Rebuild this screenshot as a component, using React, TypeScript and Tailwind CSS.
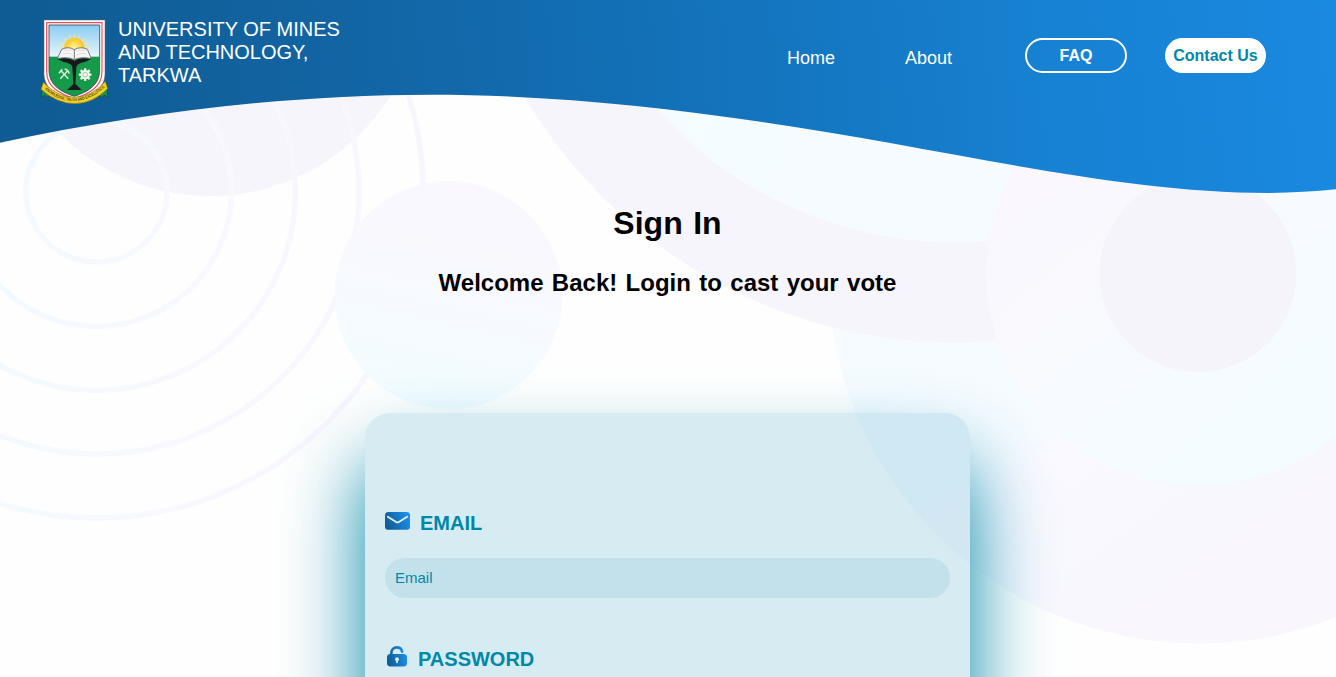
import React from "react";

function Backdrop() {
  return (
    <svg
      className="absolute inset-0 -z-10"
      width="1336"
      height="677"
      viewBox="0 0 1336 677"
      fill="none"
      aria-hidden="true"
    >
      <defs>
        <linearGradient id="outer" gradientUnits="userSpaceOnUse" x1="900" y1="330" x2="1120" y2="640">
          <stop offset="0" stopColor="#f5fbff" />
          <stop offset="0.42" stopColor="#f6fbff" />
          <stop offset="0.5" stopColor="#faf9ff" />
          <stop offset="0.7" stopColor="#f8f8fe" />
          <stop offset="1" stopColor="#f9f6fe" />
        </linearGradient>
        <linearGradient id="middle" gradientUnits="userSpaceOnUse" x1="1050" y1="160" x2="1300" y2="460">
          <stop offset="0" stopColor="#faf7fe" />
          <stop offset="0.3" stopColor="#f9f9fe" />
          <stop offset="0.5" stopColor="#f7fbff" />
          <stop offset="1" stopColor="#f3fcff" />
        </linearGradient>
        <linearGradient id="small" gradientUnits="userSpaceOnUse" x1="475" y1="181" x2="425" y2="409">
          <stop offset="0" stopColor="#faf7fe" />
          <stop offset="0.4" stopColor="#f8f9fe" />
          <stop offset="0.7" stopColor="#f5fbff" />
          <stop offset="1" stopColor="#f2fcff" />
        </linearGradient>
        <linearGradient id="arc" gradientUnits="userSpaceOnUse" x1="650" y1="120" x2="860" y2="200">
          <stop offset="0" stopColor="#f3fdff" />
          <stop offset="1" stopColor="#f6fbff" />
        </linearGradient>
        <linearGradient id="ring" gradientUnits="userSpaceOnUse" x1="20" y1="180" x2="420" y2="250">
          <stop offset="0" stopColor="#f3faff" />
          <stop offset="0.5" stopColor="#f8f8fe" />
          <stop offset="1" stopColor="#f9f5fe" />
        </linearGradient>
        <linearGradient id="wave" gradientUnits="userSpaceOnUse" x1="0" y1="120" x2="1336" y2="0">
          <stop offset="0" stopColor="#0f5b92" />
          <stop offset="0.25" stopColor="#1264a2" />
          <stop offset="0.5" stopColor="#1371b8" />
          <stop offset="0.78" stopColor="#1781d2" />
          <stop offset="1" stopColor="#1a89e0" />
        </linearGradient>
      </defs>
      <rect width="1336" height="677" fill="#fefefe" />
      <circle cx="210" cy="-17" r="213" fill="#f6f5fb" />
      <g stroke="url(#ring)" strokeWidth="5.5">
        <circle cx="96.5" cy="191.5" r="70.5" />
        <circle cx="96.5" cy="191.5" r="135" />
        <circle cx="96.5" cy="191.5" r="199" />
        <circle cx="96.5" cy="191.5" r="262.5" />
        <circle cx="96.5" cy="191.5" r="326.5" />
      </g>
      <circle cx="448.5" cy="295" r="114" fill="url(#small)" />
      <circle cx="1199" cy="273" r="370.5" fill="url(#outer)" />
      <circle cx="955" cy="-157.5" r="500" fill="#f6f5fb" />
      <circle cx="955" cy="-157.5" r="400" fill="url(#arc)" />
      <circle cx="1199" cy="273" r="212.5" fill="url(#middle)" />
      <circle cx="1198" cy="273.5" r="98.5" fill="#f5f4fb" />
      <path
        d="M0 0H1336V189.3C1314 191.5 1291 192.9 1268 192.9C1150 192.9 1018 166 893 143.5C739 116 585 94.7 430 94.7C290 94.7 145 112 0 142.7Z"
        fill="url(#wave)"
      />
    </svg>
  );
}

function Crest() {
  const rays = [-80, -60, -40, -20, 0, 20, 40, 60, 80];
  const teeth = [0, 45, 90, 135];
  return (
    <svg width="90" height="105" viewBox="0 0 270 315" fill="none" role="img" aria-label="University crest">
      <defs>
        <linearGradient id="sky" x1="0" y1="0" x2="0" y2="1">
          <stop offset="0" stopColor="#86caf2" />
          <stop offset="1" stopColor="#e8f7fb" />
        </linearGradient>
        <radialGradient id="sun">
          <stop offset="0" stopColor="#fff7b0" />
          <stop offset="0.7" stopColor="#fbd43a" />
          <stop offset="1" stopColor="#f8c52c" />
        </radialGradient>
        <clipPath id="field">
          <path d="M57 45H209V180C209 226 172 246 133 259C94 246 57 226 57 180Z" />
        </clipPath>
        <path id="motto" d="M44 238Q132 311 222 234" />
      </defs>
      <path d="M42 30H225V190C225 240 180 262 133 276C86 262 42 240 42 190Z" fill="#fffdfd" stroke="#6b6474" strokeWidth="1.5" />
      <path d="M50 38H216V185C216 232 175 252 133 266C91 252 50 232 50 185Z" stroke="#e4525f" strokeWidth="3.5" />
      <g clipPath="url(#field)">
        <rect x="50" y="40" width="170" height="102" fill="url(#sky)" />
        <g stroke="#fae38a" strokeWidth="4">
          {rays.map((a) => (
            <path key={a} d="M133 74V92" transform={`rotate(${a} 133 120)`} />
          ))}
        </g>
        <circle cx="133" cy="114" r="31" fill="url(#sun)" />
        <rect x="50" y="140" width="170" height="130" fill="#159a49" />
      </g>
      <path d="M57 45H209V180C209 226 172 246 133 259C94 246 57 226 57 180Z" stroke="#42424a" strokeWidth="2.5" />
      <path d="M82 147Q112 141 133 152Q154 141 184 147L165 156Q146 158 139 170L136 222Q147 231 155 240H111Q121 231 130 222L127 170Q120 158 101 156Z" fill="#17191c" />
      <path d="M95 118Q115 108 133 119Q152 108 172 118L184 146Q154 139 133 149Q112 139 82 146Z" fill="#f7f5f6" stroke="#605e65" strokeWidth="2.5" />
      <path d="M133 119V148" stroke="#77757b" strokeWidth="3" />
      <path d="M101 124Q118 116 128 124M97 133Q116 126 128 135M139 124Q152 116 166 123M139 135Q155 126 170 132" stroke="#d4d1d7" strokeWidth="2" />
      <g stroke="#d9eadb" strokeWidth="4.5">
        <path d="M91 206L113 182M92 181L115 206" />
        <path d="M87 190L97 178M104 177Q116 180 117 191" strokeWidth="5" />
      </g>
      <g fill="#eef5ec">
        {teeth.map((a) => (
          <rect key={a} x="162" y="175" width="7" height="38" transform={`rotate(${a} 165.5 194)`} />
        ))}
        <circle cx="165.5" cy="194" r="14" />
      </g>
      <circle cx="165.5" cy="194" r="7" stroke="#a7c9ad" strokeWidth="3" />
      <path d="M37 218L34 264L44 255L54 263L63 247ZM229 216L234 264L225 255L214 263L202 247Z" fill="#16914b" stroke="#263c2c" strokeWidth="2" />
      <path d="M40 217Q84 262 133 262Q184 262 226 214L233 236Q188 281 133 281Q81 281 33 238Z" fill="#f2d126" stroke="#806d24" strokeWidth="2" />
      <text fontFamily="Liberation Sans, sans-serif" fontSize="12.5" fontWeight="700" fill="#5b4b13">
        <textPath href="#motto" textLength="200" lengthAdjust="spacingAndGlyphs">
          KNOWLEDGE, TRUTH AND EXCELLENCE
        </textPath>
      </text>
    </svg>
  );
}

function MailIcon() {
  return (
    <svg width="25" height="18" viewBox="0 0 25 18" fill="none" aria-hidden="true">
      <defs>
        <linearGradient id="mail" x1="0" y1="0.6" x2="1" y2="0.3">
          <stop offset="0" stopColor="#0f5a92" />
          <stop offset="1" stopColor="#1e90ee" />
        </linearGradient>
      </defs>
      <rect width="25" height="17.8" rx="3.4" fill="url(#mail)" />
      <path d="M2.8 4.7L11.2 10Q12.5 10.9 13.8 10L22.2 4.7" stroke="#e3f1f8" strokeWidth="1.8" strokeLinecap="round" />
    </svg>
  );
}

function LockIcon() {
  return (
    <svg width="20" height="21" viewBox="0 0 20 21" fill="none" aria-hidden="true">
      <defs>
        <linearGradient id="lock" gradientUnits="userSpaceOnUse" x1="0" y1="14" x2="20" y2="9">
          <stop offset="0" stopColor="#0f5a92" />
          <stop offset="1" stopColor="#1e90ee" />
        </linearGradient>
      </defs>
      <path d="M4.4 9V6.6C4.4 3.7 6.8 1.4 9.7 1.4C12.6 1.4 14.7 3.2 15.2 5.8" stroke="url(#lock)" strokeWidth="2.6" strokeLinecap="round" />
      <rect y="8" width="20" height="12.4" rx="3.4" fill="url(#lock)" />
      <circle cx="10" cy="13.2" r="1.9" fill="#e3f1f8" />
      <path d="M10 13.5V16.3" stroke="#e3f1f8" strokeWidth="1.7" strokeLinecap="round" />
    </svg>
  );
}

export default function App() {
  return (
    <div className="relative isolate h-[677px] w-[1336px] overflow-hidden font-['Liberation_Sans',Arial,sans-serif]">
      <Backdrop />
      <header className="flex h-[190px] items-start pr-[70px] pl-[30px]">
        <div className="flex items-start pt-[10px]">
          <Crest />
          <p className="-ml-0.5 w-[240px] pt-2 text-xl leading-[23px] text-white">
            UNIVERSITY OF MINES AND TECHNOLOGY, TARKWA
          </p>
        </div>
        <nav className="ml-auto flex pt-[38px] text-white">
          <a className="mr-[70px] pt-[9px] text-lg leading-[22px]" href="#home">Home</a>
          <a className="mr-[73px] pt-[9px] text-lg leading-[22px]" href="#about">About</a>
          <button className="mr-[38px] h-[35px] w-[102px] rounded-full border-2 border-white text-base leading-none font-bold">
            FAQ
          </button>
          <button className="h-[35px] w-[101px] rounded-full bg-white text-base leading-none font-bold text-[#0088a9]">
            Contact Us
          </button>
        </nav>
      </header>
      <main className="flex w-[1335px] flex-col items-center text-black">
        <h1 className="mt-[15px] text-[32px] leading-9 font-bold [word-spacing:1.6px]">Sign In</h1>
        <h2 className="mt-7 text-2xl leading-7 font-bold [word-spacing:1.7px]">
          Welcome Back! Login to cast your vote
        </h2>
        <form className="mt-[116px] h-[560px] w-[605px] shrink-0 rounded-[25px] bg-[#0b8ab6]/16 px-5 pt-[97px] text-[#0088a9] shadow-[0_50px_80px_#0088a9]">
          <label className="flex h-7 items-start gap-2.5">
            <span className="pt-0.5"><MailIcon /></span>
            <span className="pt-[1px] text-xl leading-6 font-bold">EMAIL</span>
          </label>
          <input
            className="mt-5 block h-10 w-full rounded-full bg-[#c3e1eb] px-2.5 pb-0.5 text-[15px] placeholder:text-[#0088a9] placeholder:opacity-100"
            placeholder="Email"
          />
          <label className="mt-12 flex items-start pl-0.5">
            <LockIcon />
            <span className="ml-[11px] pt-[1px] text-xl leading-6 font-bold">PASSWORD</span>
          </label>
        </form>
      </main>
    </div>
  );
}
